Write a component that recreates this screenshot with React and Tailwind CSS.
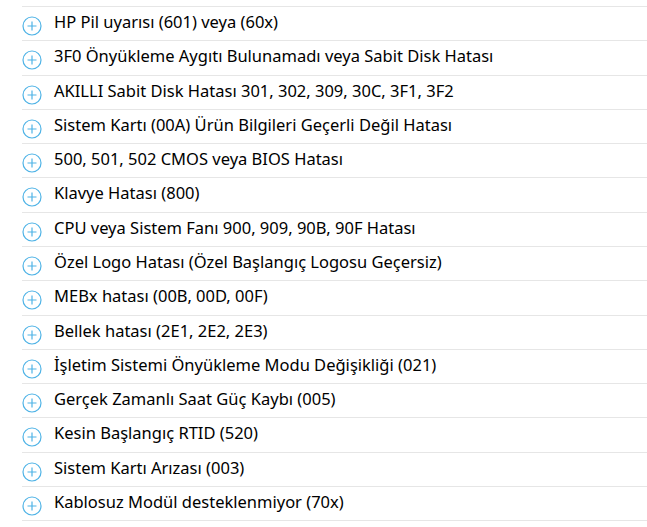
import React from 'react';

const items = [
  'HP Pil uyarısı (601) veya (60x)',
  '3F0 Önyükleme Aygıtı Bulunamadı veya Sabit Disk Hatası',
  'AKILLI Sabit Disk Hatası 301, 302, 309, 30C, 3F1, 3F2',
  'Sistem Kartı (00A) Ürün Bilgileri Geçerli Değil Hatası',
  '500, 501, 502 CMOS veya BIOS Hatası',
  'Klavye Hatası (800)',
  'CPU veya Sistem Fanı 900, 909, 90B, 90F Hatası',
  'Özel Logo Hatası (Özel Başlangıç Logosu Geçersiz)',
  'MEBx hatası (00B, 00D, 00F)',
  'Bellek hatası (2E1, 2E2, 2E3)',
  'İşletim Sistemi Önyükleme Modu Değişikliği (021)',
  'Gerçek Zamanlı Saat Güç Kaybı (005)',
  'Kesin Başlangıç RTID (520)',
  'Sistem Kartı Arızası (003)',
  'Kablosuz Modül desteklenmiyor (70x)',
];

function PlusCircle() {
  return (
    <svg width="20" height="20" viewBox="0 0 20 20" className="shrink-0">
      <circle cx="10" cy="10" r="9" fill="none" stroke="#4fb3e6" strokeWidth="1.2" />
      <path d="M10 5.5v9M5.5 10h9" stroke="#4fb3e6" strokeWidth="1.2" />
    </svg>
  );
}

export default function App() {
  return (
    <div className="w-[647px] h-[527px] bg-white overflow-hidden pt-[6px] pl-[22px]" style={{ fontFamily: '"Noto Sans", sans-serif' }}>
      <ul className="border-t border-[#e6e6e6]">
        {items.map((t) => (
          <li key={t} className="h-[34.29px] border-b border-[#e6e6e6] flex items-start">
            <div className="mt-[9px]">
              <PlusCircle />
            </div>
            <span className="ml-[12px] mt-[4px] text-[16.5px] leading-[22px] text-black whitespace-nowrap">{t}</span>
          </li>
        ))}
      </ul>
    </div>
  );
}
